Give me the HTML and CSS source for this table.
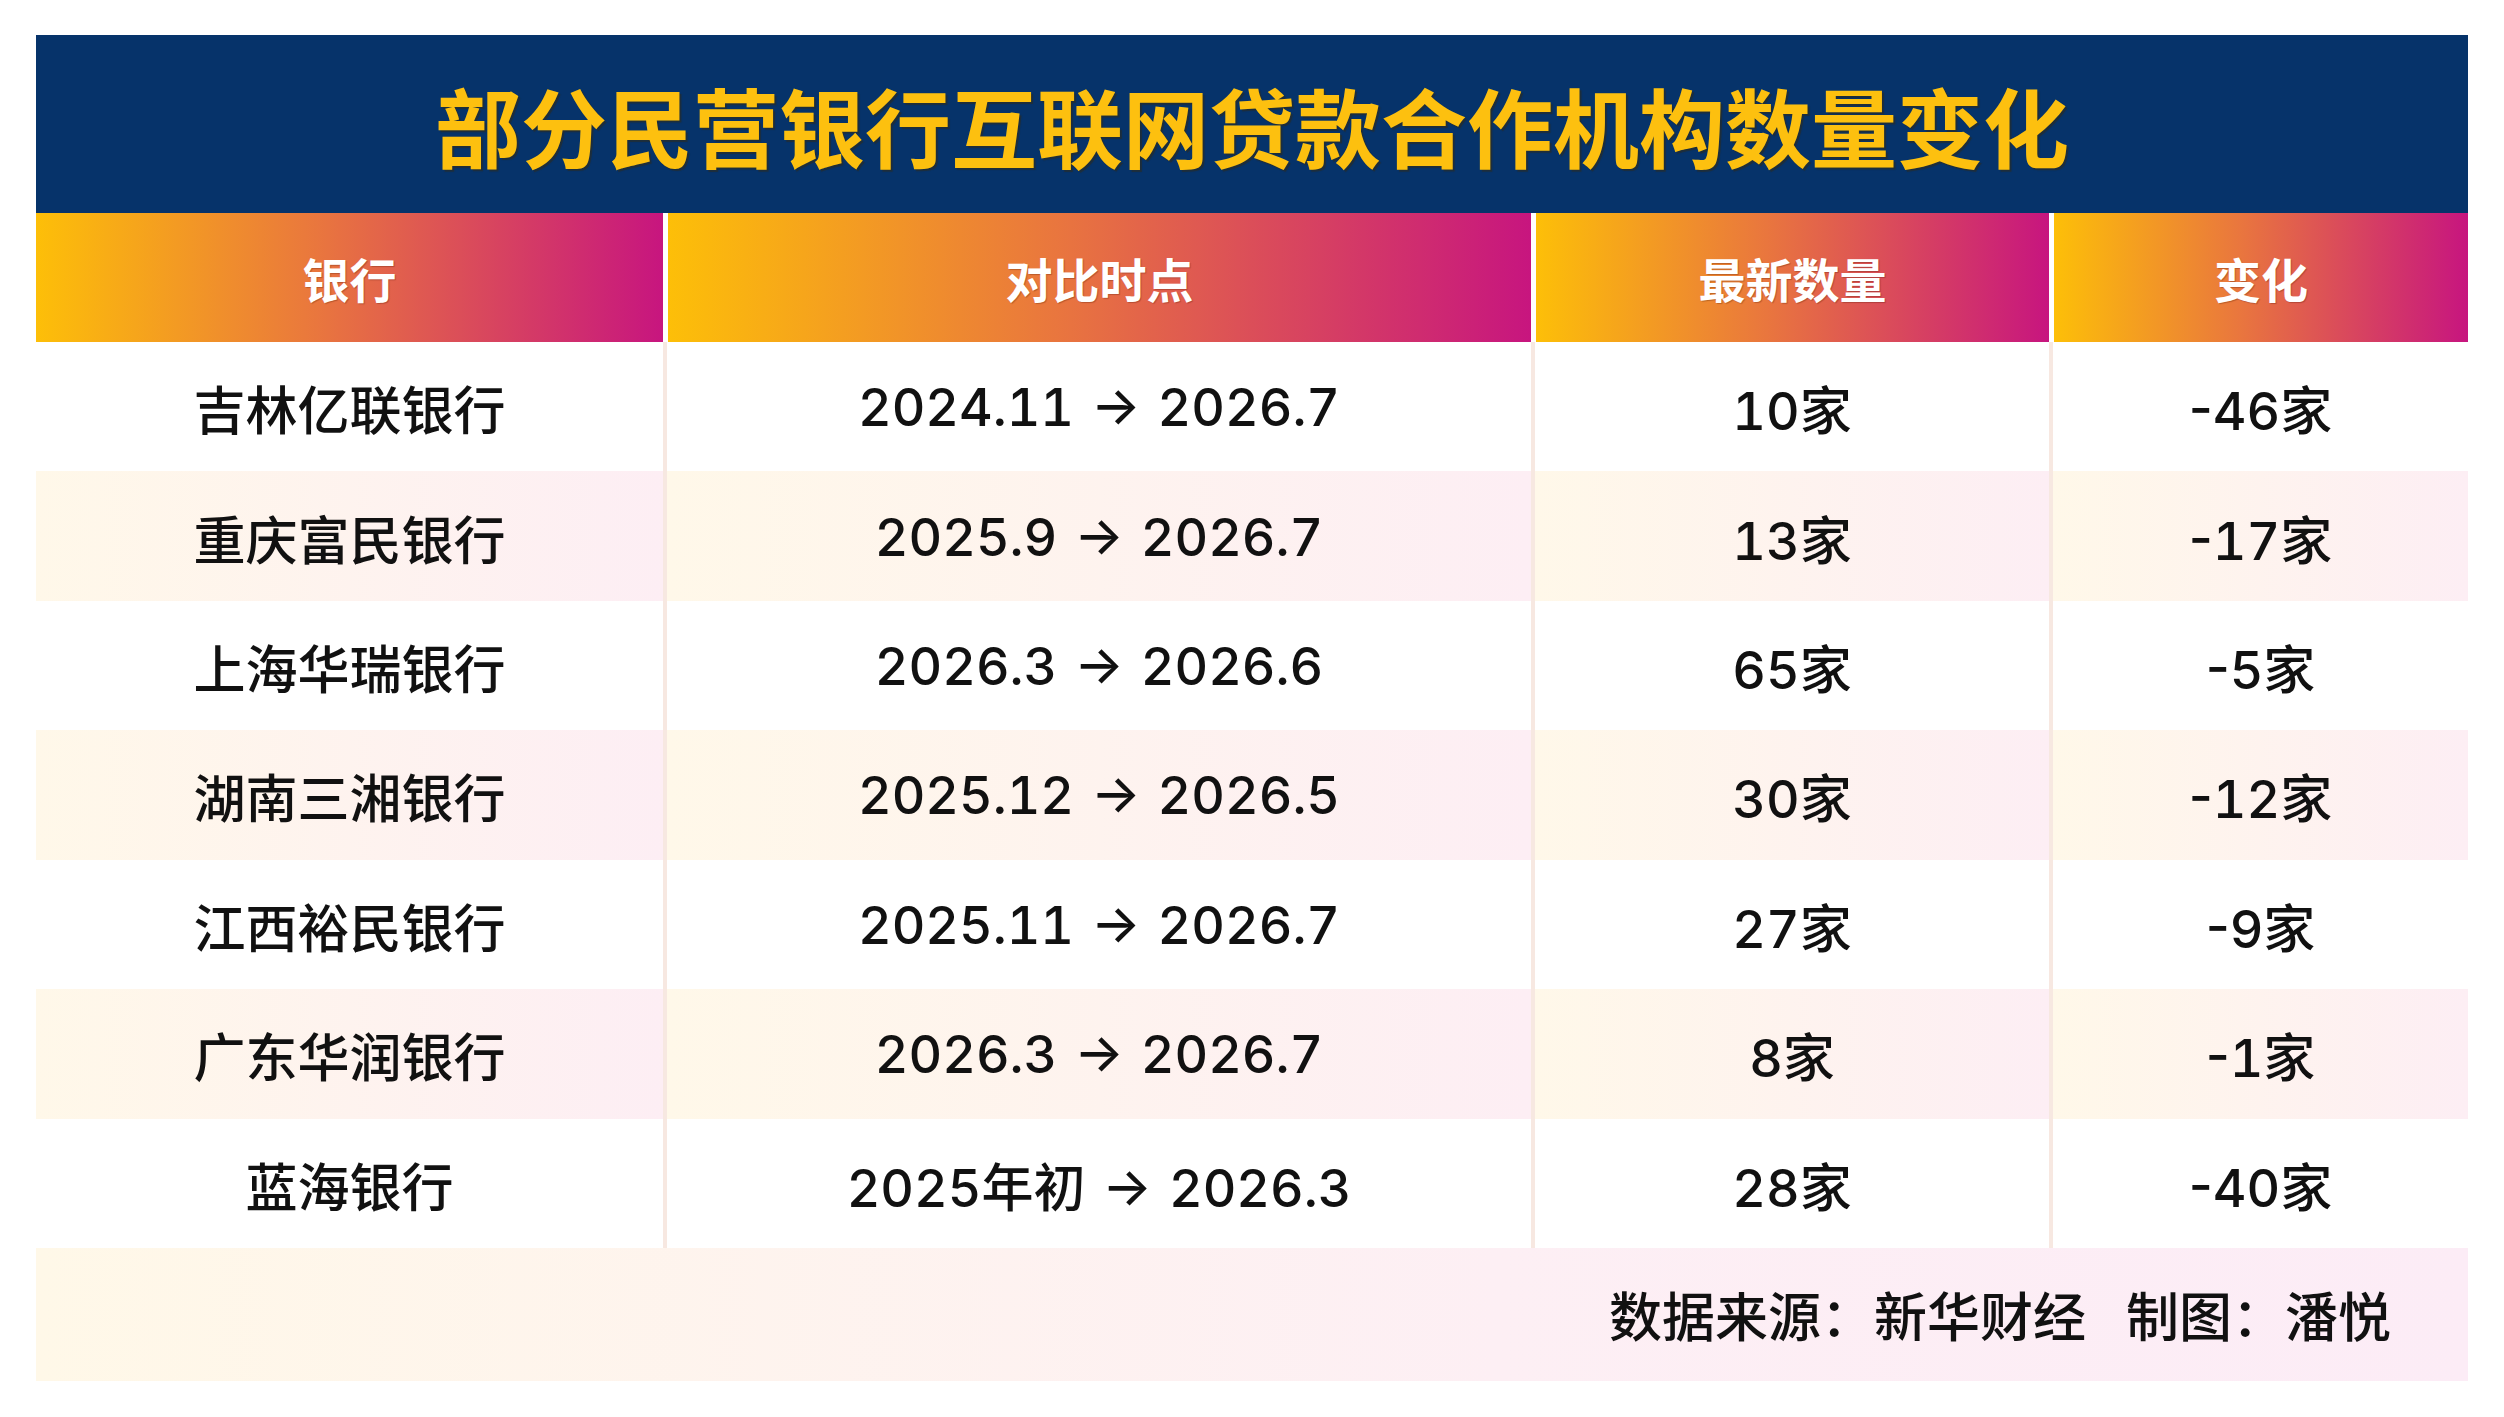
FILE: index.html
```html
<!DOCTYPE html>
<html lang="zh-CN">
<head>
<meta charset="utf-8">
<title>部分民营银行互联网贷款合作机构数量变化</title>
<link rel="stylesheet" href="styles.css">
</head>
<body>
<div class="chart">
  <div class="title">部分民营银行互联网贷款合作机构数量变化</div>
  <div class="table">
    <div class="cell head">银行</div>
    <div class="cell head">对比时点</div>
    <div class="cell head">最新数量</div>
    <div class="cell head">变化</div>

    <div class="cell">吉林亿联银行</div>
    <div class="cell">2024.11 → 2026.7</div>
    <div class="cell">10家</div>
    <div class="cell"><span class="minus">-</span>46家</div>

    <div class="cell alt">重庆富民银行</div>
    <div class="cell alt">2025.9 → 2026.7</div>
    <div class="cell alt">13家</div>
    <div class="cell alt"><span class="minus">-</span>17家</div>

    <div class="cell">上海华瑞银行</div>
    <div class="cell">2026.3 → 2026.6</div>
    <div class="cell">65家</div>
    <div class="cell"><span class="minus">-</span>5家</div>

    <div class="cell alt">湖南三湘银行</div>
    <div class="cell alt">2025.12 → 2026.5</div>
    <div class="cell alt">30家</div>
    <div class="cell alt"><span class="minus">-</span>12家</div>

    <div class="cell">江西裕民银行</div>
    <div class="cell">2025.11 → 2026.7</div>
    <div class="cell">27家</div>
    <div class="cell"><span class="minus">-</span>9家</div>

    <div class="cell alt">广东华润银行</div>
    <div class="cell alt">2026.3 → 2026.7</div>
    <div class="cell alt">8家</div>
    <div class="cell alt"><span class="minus">-</span>1家</div>

    <div class="cell">蓝海银行</div>
    <div class="cell">2025年初 → 2026.3</div>
    <div class="cell">28家</div>
    <div class="cell"><span class="minus">-</span>40家</div>
  </div>
  <div class="footer">
    <span>数据来源：新华财经</span><span class="credit">制图：潘悦</span>
  </div>
</div>
</body>
</html>
```

FILE: styles.css
```css
html, body {
  margin: 0;
  padding: 0;
  background: #ffffff;
}

body {
  font-family: "Inter", "Noto Sans CJK SC", sans-serif;
  color: #111111;
}

.chart {
  width: 2432px;
  margin: 35px 0 0 36px;
}

.title {
  height: 178px;
  background: #06336a;
  color: #fdc00f;
  font-family: "Noto Sans CJK SC", sans-serif;
  font-weight: 700;
  font-size: 86px;
  display: flex;
  align-items: center;
  justify-content: center;
  text-shadow: 2px 2px 1px rgba(60, 40, 0, 0.45);
}

.table {
  display: grid;
  grid-template-columns: 627px 868px 518px 419px;
  grid-template-rows: 129px repeat(7, 129.43px);
}

.cell {
  display: flex;
  align-items: center;
  justify-content: center;
  font-size: 52px;
  font-weight: 500;
  font-variant-numeric: tabular-nums;
  word-spacing: 3px;
  box-sizing: border-box;
  padding-top: 2px;
  white-space: pre;
}

.minus {
  font-variant-numeric: normal;
}

.cell:not(:nth-child(4n+1)) {
  border-left: 4px solid #f7e8e1;
}

.cell.head {
  background: linear-gradient(90deg, #fdbf08 0%, #e9763e 45%, #c7157f 100%);
  color: #ffffff;
  font-family: "Noto Sans CJK SC", sans-serif;
  font-weight: 700;
  font-size: 47px;
  word-spacing: 0;
  text-shadow: 1px 1px 1px rgba(80, 20, 0, 0.3);
  padding-top: 0;
}

.cell.head:not(:first-child) {
  border-left: 5px solid #ffffff;
}

.cell.alt {
  background: linear-gradient(90deg, #fff8e9 0%, #fdeef4 100%);
}

.footer {
  height: 133px;
  background: linear-gradient(90deg, #fff8e8 0%, #fdeff4 60%, #fcecf6 100%);
  display: flex;
  align-items: center;
  justify-content: flex-end;
  padding-right: 77px;
  font-family: "Noto Sans CJK SC", sans-serif;
  font-size: 53px;
  font-weight: 500;
}

.credit {
  margin-left: 40px;
}
```
